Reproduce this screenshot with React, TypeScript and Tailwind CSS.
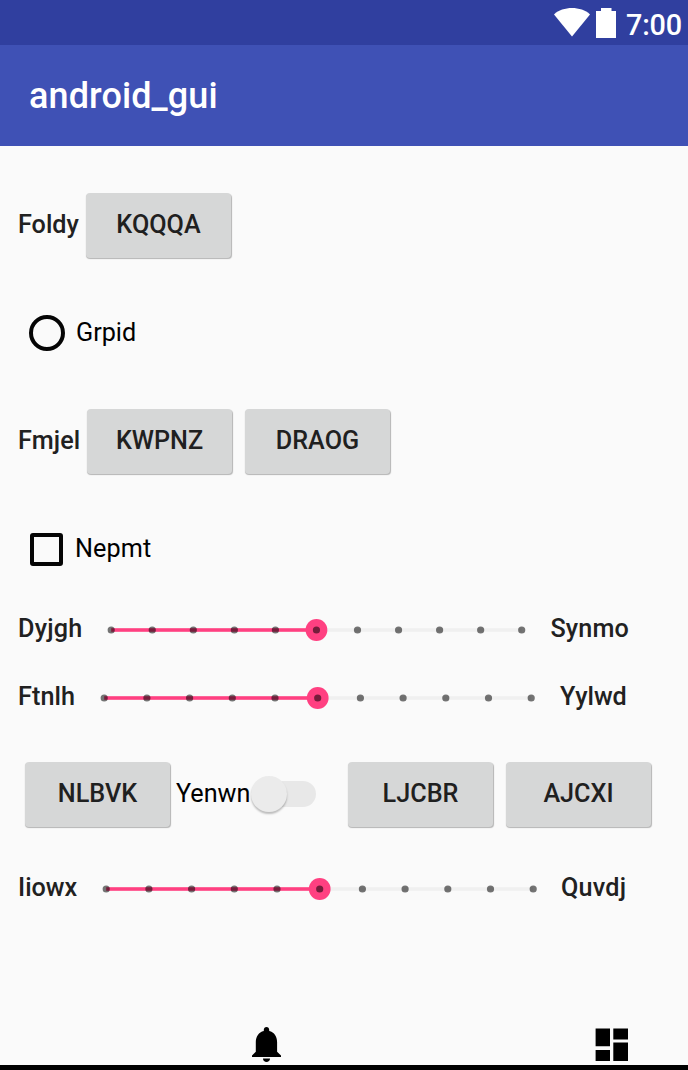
import type { ReactNode } from "react";

function Label({ children, className }: { children: ReactNode; className: string }) {
  return (
    <span className={`shrink-0 whitespace-nowrap text-[25.2px] leading-[30px] font-medium text-[#212121] ${className}`}>
      {children}
    </span>
  );
}

function Button({ children, className = "" }: { children: ReactNode; className?: string }) {
  return (
    <button
      className={`flex h-[65px] w-[145px] shrink-0 items-center justify-center rounded-[4px] bg-[#d6d7d7] text-[25.2px] leading-[30px] font-medium text-[#1f2020] shadow-[0.5px_1px_1px_rgba(0,0,0,0.28)] ${className}`}
    >
      {children}
    </button>
  );
}

function Slider({ length, className = "" }: { length: number; className?: string }) {
  const mid = 4.2 + length / 2;
  const ticks = Array.from({ length: 11 }, (_, i) => 4.2 + (length * i) / 10);
  return (
    <svg width={length + 8} height="24" className={`shrink-0 ${className}`}>
      <rect x={mid} y="10.2" width={length / 2} height="3.6" fill="#f0f0f0" />
      <rect x="4.2" y="10.2" width={length / 2} height="3.6" fill="#ff4081" />
      <circle cx={mid} cy="12" r="10.9" fill="#ff4081" />
      {ticks.map((x) => (
        <circle key={x} cx={x} cy="12" r="3.6" fill="#000" fillOpacity="0.54" />
      ))}
    </svg>
  );
}

export default function App() {
  return (
    <div className="flex h-[1070px] w-[688px] flex-col overflow-hidden bg-[#fafafa] font-[Roboto,sans-serif]">
      <div className="flex h-[45px] shrink-0 items-center justify-end bg-[#303f9f] pr-[5px] text-white">
        <svg width="36" height="29" viewBox="0 0 36 29" className="mb-[1px]">
          <path d="M0 6.4C9-2 27-2 36 6.4L18 28.6Z" fill="#fff" />
        </svg>
        <svg width="20" height="30" viewBox="0 0 20 30" className="ml-[6px]">
          <path d="M5 0H15.5V3H20V30H0V3H5Z" fill="#fff" />
        </svg>
        <span className="ml-[10px] w-[57px] pt-[4px] text-[28.8px] leading-[34px] font-medium tracking-[-0.2px]">7:00</span>
      </div>
      <header className="flex h-[101px] shrink-0 items-center bg-[#3f51b5] pl-[29px]">
        <h1 className="text-[36px] leading-[42px] font-medium tracking-[0.1px] text-white">android_gui</h1>
      </header>

      <div className="flex h-[158px] shrink-0 items-center">
        <Label className="w-[86px] pl-[18px]">Foldy</Label>
        <Button>KQQQA</Button>
      </div>
      <div className="flex h-[58px] shrink-0 items-center pl-[29px]">
        <span className="size-[36px] rounded-full border-4 border-[#050505]" />
        <span className="ml-[11px] text-[25.2px] leading-[30px] text-black">Grpid</span>
      </div>
      <div className="flex h-[158px] shrink-0 items-center">
        <Label className="w-[87px] pl-[18px]">Fmjel</Label>
        <Button>KWPNZ</Button>
        <Button className="ml-[13px]">DRAOG</Button>
      </div>
      <div className="flex h-[58px] shrink-0 items-center pl-[30px]">
        <span className="size-[33px] rounded-[3px] border-4 border-[#050505]" />
        <span className="ml-[12px] text-[25.2px] leading-[30px] tracking-[0.1px] text-black">Nepmt</span>
      </div>
      <div className="mt-[18px] flex h-[68px] shrink-0 items-center">
        <Label className="w-[107px] pb-[2px] pl-[18px] tracking-[0.2px]">Dyjgh</Label>
        <Slider length={410.5} />
        <Label className="ml-[25px] pb-[2px] tracking-[0.1px]">Synmo</Label>
      </div>
      <div className="flex h-[68px] shrink-0 items-center">
        <Label className="w-[100px] pb-[2px] pl-[18px] tracking-[0.1px]">Ftnlh</Label>
        <Slider length={427} />
        <Label className="ml-[25px] pb-[2px]">Yylwd</Label>
      </div>
      <div className="flex h-[124px] shrink-0 items-center pl-[25px]">
        <Button>NLBVK</Button>
        <span className="ml-[6px] w-[75px] shrink-0 text-[25.2px] leading-[30px] text-black">Yenwn</span>
        <div className="flex h-[26px] w-[65px] shrink-0 items-center rounded-full bg-[linear-gradient(to_right,transparent_18px,#e8e8e8_18px)]">
          <span className="size-[36px] rounded-full bg-[#ebebeb] shadow-[0_2px_2px_rgba(0,0,0,0.25)]" />
        </div>
        <Button className="ml-[32px]">LJCBR</Button>
        <Button className="ml-[13px]">AJCXI</Button>
      </div>
      <div className="flex h-[66px] shrink-0 items-center">
        <Label className="w-[102px] pb-[2px] pl-[18px]">Iiowx</Label>
        <Slider length={427} />
        <Label className="ml-[24px] pb-[2px] tracking-[0.2px]">Quvdj</Label>
      </div>

      <nav className="mt-auto flex shrink-0 items-end border-b-[5px] border-black pb-[3px]">
        <svg width="29" height="35" viewBox="0 0 29 35" className="ml-[252px]">
          <path d="M14.5 0c1.6 0 2.7 1.2 2.7 2.7v1.2c5.1 1.2 7.900 5.700 7.900 11V24.700l3.900 3.800v1.600H0v-1.600l3.800-3.800V14.900c0-5.300 2.900-9.800 8-11V2.700C11.800 1.200 12.900 0 14.500 0Z" fill="#000" />
          <path d="M11 31.500h7c0 2-1.600 3.500-3.500 3.500S11 33.500 11 31.500Z" fill="#000" />
        </svg>
        <svg width="33" height="33" viewBox="0 0 33 33" className="mb-[1px] ml-[314px]">
          <path d="M0.600 0.400H15V18.200H0.600ZM18.300 0.400H33V11.400H18.300ZM0.600 22H15V33H0.600ZM18.300 14.600H33V33H18.300Z" fill="#000" />
        </svg>
      </nav>
    </div>
  );
}
